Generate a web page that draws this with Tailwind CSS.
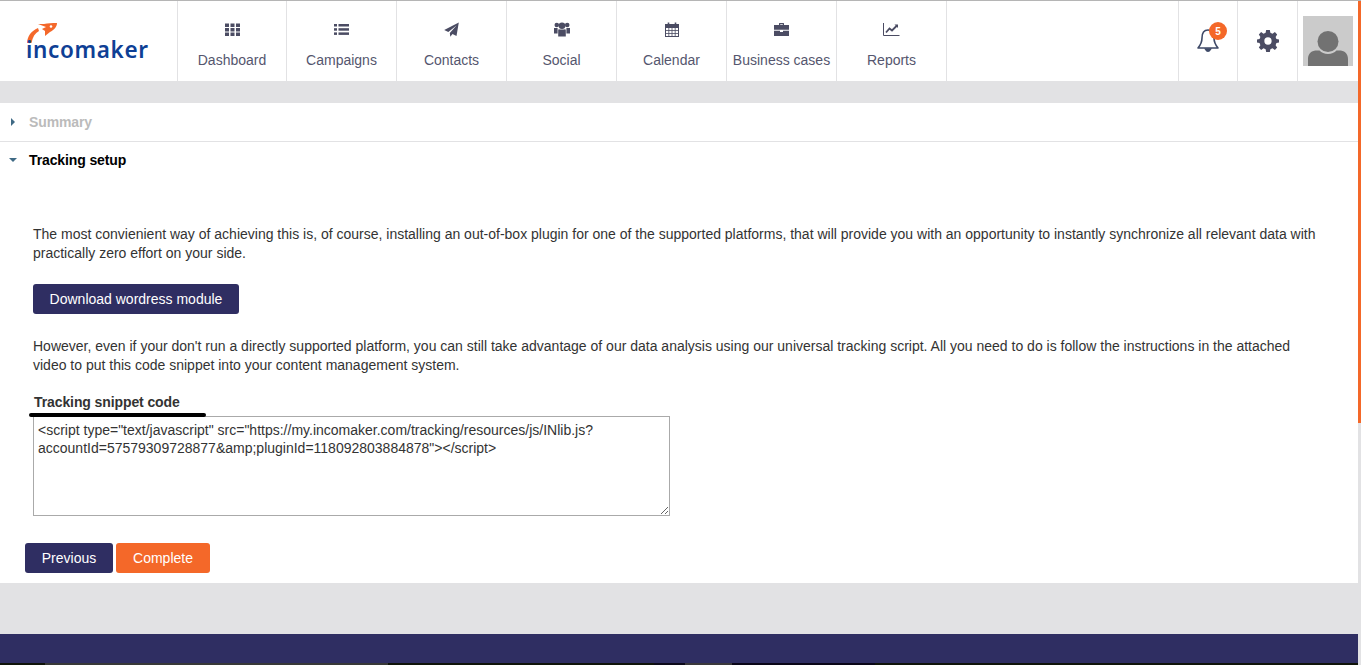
<!DOCTYPE html>
<html lang="en">
<head>
    <meta charset="UTF-8">
    <title>Incomaker - Tracking setup</title>
    <script src="https://cdn.jsdelivr.net/npm/@tailwindcss/browser@4"></script>
</head>
<body class="bg-[#e2e2e4] h-[665px] overflow-hidden font-['Liberation_Sans',Arial,sans-serif] text-[14px] relative">

<!-- Header -->
<header class="h-[81px] bg-white border-t border-[#b5b5b5] flex pr-[3px]">
    <a class="w-[177px] shrink-0 pl-[26px] pt-[20px] block">
        <svg class="overflow-visible" width="130" height="44" viewBox="0 0 130 44">
            <path d="M1 22 C1.500 15 5 10 12 7 L13 10 C9 12 6.500 16 5.500 22 Z" fill="#f4682a"/>
            <path d="M12 3 L18 3 C22 2 26 2 31 2 C31 6 28 9 24 11 L19 15 L19 10 L16 8 L20 6 Z" fill="#f4682a"/>
            <circle cx="25" cy="5.500" r="1.300" fill="#fff"/>
            <text x="0" y="37" font-family="'Noto Sans','Open Sans',sans-serif" font-size="22.500" font-weight="600" fill="#0e3f95" textLength="122">incomaker</text>
        </svg>
    </a>
    <nav class="flex border-l border-[#e2e2e4] text-[#55566e]">
        <a class="w-[109px] border-r border-[#e2e2e4] flex flex-col items-center pt-[21px]">
            <svg class="w-[15px] h-[15px]" viewBox="0 0 15 15" fill="#4b4c63"><rect x="0" y="1.500" width="4" height="3.500"/><rect x="5.500" y="1.500" width="4" height="3.500"/><rect x="11" y="1.500" width="4" height="3.500"/><rect x="0" y="6" width="4" height="3.500"/><rect x="5.500" y="6" width="4" height="3.500"/><rect x="11" y="6" width="4" height="3.500"/><rect x="0" y="10.500" width="4" height="3.500"/><rect x="5.500" y="10.500" width="4" height="3.500"/><rect x="11" y="10.500" width="4" height="3.500"/></svg>
            <span class="mt-[15px] leading-[16px]">Dashboard</span>
        </a>
        <a class="w-[110px] border-r border-[#e2e2e4] flex flex-col items-center pt-[21px]">
            <svg class="w-[15px] h-[15px]" viewBox="0 0 15 15" fill="#4b4c63"><rect x="0" y="2" width="3" height="2.500"/><rect x="4.500" y="2" width="10.500" height="2.500"/><rect x="0" y="6.200" width="3" height="2.500"/><rect x="4.500" y="6.200" width="10.500" height="2.500"/><rect x="0" y="10.400" width="3" height="2.500"/><rect x="4.500" y="10.400" width="10.500" height="2.500"/></svg>
            <span class="mt-[15px] leading-[16px]">Campaigns</span>
        </a>
        <a class="w-[110px] border-r border-[#e2e2e4] flex flex-col items-center pt-[21px]">
            <svg class="w-[15px] h-[15px]" viewBox="0 0 15 15" fill="#4b4c63"><path d="M14.800 0.500 L12.500 14 L8.500 12 L6.300 14.800 L5.800 11 L12.500 3.500 L4.300 10 L0.200 8 Z"/></svg>
            <span class="mt-[15px] leading-[16px]">Contacts</span>
        </a>
        <a class="w-[110px] border-r border-[#e2e2e4] flex flex-col items-center pt-[21px]">
            <svg class="w-[16px] h-[15px]" viewBox="0 0 16 15" fill="#4b4c63"><circle cx="2.800" cy="3" r="2.300"/><circle cx="13.200" cy="3" r="2.300"/><circle cx="8" cy="3.800" r="3.300"/><path d="M0 6 H3.600 V11.500 H0 Z M12.400 6 H16 V11.500 H12.400 Z"/><path d="M4.200 8 Q4.200 7 6 7.500 H10 Q11.800 7 11.800 8 V14.500 H4.200 Z"/></svg>
            <span class="mt-[15px] leading-[16px]">Social</span>
        </a>
        <a class="w-[110px] border-r border-[#e2e2e4] flex flex-col items-center pt-[21px]">
            <svg class="w-[14px] h-[15px]" viewBox="0 0 14 15" fill="none" stroke="#4b4c63"><rect x="0.500" y="2.500" width="13" height="12"/><path d="M0.500 3 H13.500 V5.500 H0.500 Z" fill="#4b4c63"/><path d="M0.500 8.500 H13.500 M0.500 11.500 H13.500 M3.800 5.500 V14.500 M7 5.500 V14.500 M10.200 5.500 V14.500" stroke-width="0.800"/><path d="M3.500 0.500 V3 M10.500 0.500 V3" stroke-width="1.600"/></svg>
            <span class="mt-[15px] leading-[16px]">Calendar</span>
        </a>
        <a class="w-[110px] border-r border-[#e2e2e4] flex flex-col items-center pt-[21px]">
            <svg class="w-[15px] h-[15px]" viewBox="0 0 15 15" fill="#4b4c63"><path d="M5 3 V1.500 Q5 1 5.500 1 H9.500 Q10 1 10 1.500 V3 H8.800 V2.200 H6.200 V3 Z"/><path d="M0 3 H15 V7.800 H0 Z M0 8.800 H6 V10 H9 V8.800 H15 V14 H0 Z"/></svg>
            <span class="mt-[15px] leading-[16px]">Business cases</span>
        </a>
        <a class="w-[110px] border-r border-[#e2e2e4] flex flex-col items-center pt-[21px]">
            <svg class="w-[17px] h-[15px]" viewBox="0 0 17 15" fill="none" stroke="#4b4c63"><path d="M0.500 1 V13.500 H16.500" stroke-width="1"/><path d="M3 10.500 L6.500 6.500 L9 8.500 L14 3.500" stroke-width="1.800"/><path d="M11.500 2.500 H15 V6 Z" fill="#4b4c63" stroke="none"/></svg>
            <span class="mt-[15px] leading-[16px]">Reports</span>
        </a>
    </nav>
    <div class="ml-auto flex">
        <a class="w-[59px] border-l border-[#e2e2e4] relative">
            <svg class="absolute left-[17px] top-[27px]" width="24" height="25" viewBox="0 0 24 25" fill="none" stroke="#3f4a68" stroke-width="1.600"><path d="M12 2 C7.500 2 6 6 6 10 C6 15 4.500 17 2 20 H22 C19.500 17 18 15 18 10 C18 6 16.500 2 12 2 Z" stroke-linejoin="round"/><path d="M9.500 21 Q12 25.500 14.500 21 Z" fill="#3f4a68"/></svg>
            <span class="absolute left-[30px] top-[21px] w-[18px] h-[18px] rounded-full bg-[#f46829] text-white text-[10px] font-bold flex items-center justify-center">5</span>
        </a>
        <a class="w-[60px] border-l border-[#e2e2e4] flex items-center justify-center">
            <svg width="22" height="22" viewBox="0 0 24 24" fill="#4b4c63"><path fill-rule="evenodd" d="M10 1 H14 L14.600 4 L16.900 5 L19.500 3.300 L22 6 L20.300 8.500 L21.200 10.800 L24 11.300 V14.700 L21.200 15.200 L20.300 17.500 L22 20 L19.500 22.700 L16.900 21 L14.600 22 L14 25 H10 L9.400 22 L7.100 21 L4.500 22.700 L2 20 L3.700 17.500 L2.800 15.200 L0 14.700 V11.300 L2.800 10.800 L3.700 8.500 L2 6 L4.500 3.300 L7.100 5 L9.400 4 Z M12 9 A4 4 0 1 0 12 17 A4 4 0 1 0 12 9 Z" transform="translate(0 -1)"/></svg>
        </a>
        <a class="w-[61px] border-l border-[#e2e2e4] pl-[5px] pt-[15px]">
            <svg class="block" width="50" height="50" viewBox="0 0 50 50"><rect width="50" height="50" fill="#cbcbcb"/><circle cx="25" cy="25.500" r="10.500" fill="#727272"/><path d="M5 50 V43 C5 37 9 34.500 14 34.500 H16.500 C18.500 36.500 21.500 38 25 38 C28.500 38 31.500 36.500 33.500 34.500 H36 C41 34.500 45 37 45 43 V50 Z" fill="#727272"/></svg>
        </a>
    </div>
</header>

<!-- Wizard panel -->
<main class="mt-[22px] mr-[3px] h-[480px] bg-white">
    <div class="h-[39px] border-b border-[#e2e2e4] flex items-center">
        <span class="ml-[11px] w-0 h-0 border-y-[4px] border-y-transparent border-l-[4px] border-l-[#3f6a85] mt-[-1px]"></span>
        <h3 class="ml-[14px] font-bold text-[#bbbbbb] leading-[16px] mt-[-1px] tracking-[-0.12px]">Summary</h3>
    </div>
    <div class="h-[37px] flex items-center">
        <span class="ml-[9px] w-0 h-0 border-x-[4px] border-x-transparent border-t-[4px] border-t-[#3f6a85] mt-[-2px]"></span>
        <h3 class="ml-[12px] font-bold text-black leading-[16px] mt-[-2px] tracking-[-0.12px]">Tracking setup</h3>
    </div>

    <div class="pl-[33px] pr-[38px] pt-[46px] text-[#333333] leading-[19px]">
        <p>The most convienient way of achieving this is, of course, installing an out-of-box plugin for one of the supported platforms, that will provide you with an opportunity to instantly synchronize all relevant data with practically zero effort on your side.</p>
        <button class="block mt-[21px] h-[30px] w-[206px] rounded-[3px] bg-[#2f2e62] text-white text-[14px]">Download wordress module</button>
        <p class="mt-[23px]">However, even if your don't run a directly supported platform, you can still take advantage of our data analysis using our universal tracking script. All you need to do is follow the instructions in the attached video to put this code snippet into your content management system.</p>
        <label class="block mt-[19px] font-bold text-[#333333] leading-[16px] pl-[1px] tracking-[-0.1px]">Tracking snippet code</label>
        <div class="relative mt-[6px]">
            <div class="absolute left-[-4px] top-[-3px] w-[177px] h-[4px] rounded-full bg-black"></div>
            <textarea readonly class="block w-[637px] h-[100px] border border-[#aaaaaa] px-[4px] pt-[4px] pb-[2px] text-[14px] leading-[18px] text-[#333333] outline-none">&lt;script type="text/javascript" src="https://my.incomaker.com/tracking/resources/js/INlib.js?accountId=57579309728877&amp;amp;pluginId=118092803884878"&gt;&lt;/script&gt;</textarea>
        </div>
    </div>
    <div class="flex gap-[3px] pl-[25px] mt-[27px]">
        <button class="w-[88px] h-[30px] rounded-[3px] bg-[#2f2e62] text-white">Previous</button>
        <button class="w-[94px] h-[30px] rounded-[3px] bg-[#f46829] text-white">Complete</button>
    </div>
</main>

<!-- Footer -->
<footer class="mt-[51px] h-[29px] bg-[#2f2e62]"></footer>
<div class="h-[2px] flex">
    <div class="w-[45px] bg-[#10140a]"></div>
    <div class="w-[343px] bg-[#383838]"></div>
    <div class="w-[266px] bg-[#10140a]"></div>
    <div class="w-[31px] bg-[#0d0a1a]"></div>
    <div class="w-[47px] bg-[#3a383c]"></div>
    <div class="w-[143px] bg-[#0a0618]"></div>
    <div class="flex-1 bg-[#10140a]"></div>
</div>

<!-- Page scroll indicator -->
<div class="absolute right-0 top-[1px] bottom-0 w-[3px] bg-[#e2e2e4]">
    <div class="h-[422px] bg-[#f46829]"></div>
</div>

</body>
</html>
